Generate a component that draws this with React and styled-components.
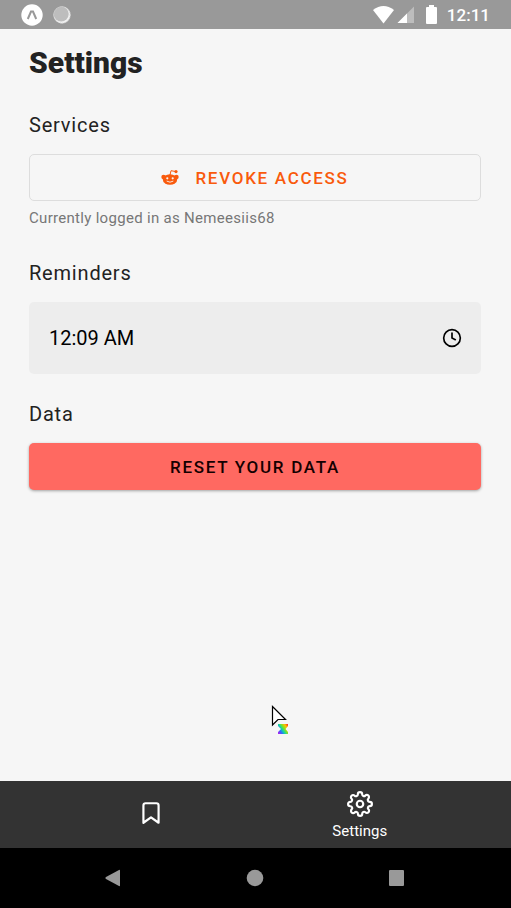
import React from "react";
import styled, { createGlobalStyle } from "styled-components";
import { FiBookmark, FiClock, FiSettings } from "react-icons/fi";

const GlobalStyle = createGlobalStyle`
  *, *::before, *::after { box-sizing: border-box; }
  body {
    margin: 0;
    background: #f6f6f6;
    font-family: Roboto, "Liberation Sans", sans-serif;
  }
  button { font-family: inherit; cursor: pointer; }
`;

const Screen = styled.div`
  display: flex;
  flex-direction: column;
  min-height: 100vh;
  color: #222;
`;

const StatusBar = styled.header`
  display: flex;
  align-items: center;
  justify-content: space-between;
  height: 29px;
  padding: 0 21px;
  background: #999;
  color: #fff;
`;

const StatusGroup = styled.div`
  display: flex;
  align-items: center;
  gap: ${(p) => p.$gap}px;
`;

const Clock = styled.time`
  margin-left: 10px;
  font-size: 17px;
  font-weight: 500;
  line-height: 20px;
`;

const Battery = styled.svg`
  margin-left: 11px;
`;

const Content = styled.main`
  flex: 1;
  padding: 16px 30px 30px 29px;
`;

const Title = styled.h1`
  margin: 0 0 30px;
  font-size: 30px;
  font-weight: 900;
  line-height: 36px;
`;

const Section = styled.section`
  margin-bottom: 26px;
`;

const SectionTitle = styled.h2`
  margin: 0 0 15px;
  font-size: 20px;
  font-weight: 400;
  letter-spacing: 0.04em;
  line-height: 28px;
`;

const ActionButton = styled.button`
  display: flex;
  align-items: center;
  justify-content: center;
  gap: 16px;
  width: 100%;
  height: 47px;
  border-radius: 5px;
  border: ${(p) => (p.$danger ? "0" : "1px solid #ddd")};
  background: ${(p) => (p.$danger ? "#ff6961" : "transparent")};
  box-shadow: ${(p) => (p.$danger ? "0 1px 3px rgba(0, 0, 0, 0.35)" : "none")};
  color: ${(p) => (p.$danger ? "#140000" : "#f95a0c")};
  font-size: 17px;
  font-weight: 500;
  letter-spacing: 0.1em;
`;

const Hint = styled.p`
  margin: 6px 0 30px;
  color: #777;
  font-size: 15px;
  letter-spacing: 0.02em;
  line-height: 22px;
`;

const TimeField = styled.button`
  display: flex;
  align-items: center;
  justify-content: space-between;
  width: 100%;
  height: 72px;
  padding: 0 19px 0 20px;
  border: 0;
  border-radius: 5px;
  background: #ededed;
  color: #000;
  font-size: 20px;
`;

const TabBar = styled.nav`
  display: flex;
  height: 67px;
  padding: 0 47px;
  background: #333;
`;

const Tab = styled.a`
  display: flex;
  flex: 1;
  flex-direction: column;
  align-items: center;
  justify-content: center;
  gap: 4px;
  padding: ${(p) => (p.$iconOnly ? "0 0 4px" : "2px 0 0")};
  color: #fff;
  font-size: 15px;
  line-height: 20px;
  text-decoration: none;
`;

const SystemBar = styled.footer`
  display: flex;
  align-items: center;
  justify-content: space-between;
  height: 60px;
  padding: 0 102px 0 101px;
  background: #000;
`;

const SystemButton = styled.button`
  display: flex;
  padding: 0;
  border: 0;
  background: none;
  color: #999;
`;

const Pointer = styled.svg`
  position: absolute;
  left: 271px;
  top: 705px;
  pointer-events: none;
`;

function RedditIcon() {
  return (
    <svg width="18" height="18" viewBox="0 0 18 18" aria-hidden="true">
      <path d="M9 6 10 1.700 14.500 2.500" fill="none" stroke="currentColor" strokeWidth="1" />
      <circle cx="15" cy="2.600" r="1.600" fill="currentColor" />
      <circle cx="2.600" cy="8" r="2.300" fill="currentColor" />
      <circle cx="15.400" cy="8" r="2.300" fill="currentColor" />
      <ellipse cx="9" cy="10.500" rx="7.200" ry="5.300" fill="currentColor" />
      <circle cx="6.300" cy="9.300" r="1.100" fill="#f6f6f6" />
      <circle cx="11.700" cy="9.300" r="1.100" fill="#f6f6f6" />
      <path d="M6 12.300Q9 14.300 12 12.300" fill="none" stroke="#f6f6f6" strokeWidth="0.900" strokeLinecap="round" />
    </svg>
  );
}

function StatusIcons() {
  return (
    <StatusGroup $gap={10}>
      <svg width="22" height="22" viewBox="0 0 22 22" aria-hidden="true">
        <circle cx="11" cy="11" r="10.7" fill="#fff" />
        <path d="M6.8 15 10 7.5h2L15.2 15" fill="none" stroke="#999" strokeWidth="2" />
      </svg>
      <svg width="18" height="18" viewBox="0 0 18 18" aria-hidden="true">
        <circle cx="9" cy="9" r="8.500" fill="#f1f1f1" />
        <circle cx="8.2" cy="8" r="7.5" fill="#bdbdbd" />
        <circle cx="9" cy="9" r="8.2" fill="none" stroke="#ccc" strokeWidth="1" strokeDasharray="1 1" />
      </svg>
    </StatusGroup>
  );
}

function StatusSignals() {
  return (
    <StatusGroup $gap={0}>
      <svg width="42" height="19" viewBox="0 0 42 19" aria-hidden="true">
        <path d="M0 5Q10.500-3 21 5L10.500 18.500Z" fill="#fff" />
        <path d="M41 1.500V18H24.500Z" fill="#bdbdbd" />
        <path d="M34 8.500V18H24.500Z" fill="#fff" />
      </svg>
      <Battery width="11" height="19" viewBox="0 0 11 19" aria-hidden="true">
        <path d="M3 0h5v2h2q1 0 1 1v15q0 1-1 1H1q-1 0-1-1V3q0-1 1-1h2Z" fill="#fff" />
      </Battery>
      <Clock>12:11</Clock>
    </StatusGroup>
  );
}

export default function App() {
  return (
    <Screen>
      <GlobalStyle />
      <StatusBar>
        <StatusIcons />
        <StatusSignals />
      </StatusBar>

      <Content>
        <Title>Settings</Title>
        <Section>
          <SectionTitle>Services</SectionTitle>
          <ActionButton type="button">
            <RedditIcon />
            REVOKE ACCESS
          </ActionButton>
          <Hint>Currently logged in as Nemeesiis68</Hint>
        </Section>
        <Section>
          <SectionTitle id="reminders">Reminders</SectionTitle>
          <TimeField type="button" aria-describedby="reminders">
            12:09 AM
            <FiClock size={20} aria-hidden="true" />
          </TimeField>
        </Section>
        <Section>
          <SectionTitle>Data</SectionTitle>
          <ActionButton type="button" $danger>
            RESET YOUR DATA
          </ActionButton>
        </Section>
      </Content>

      <TabBar>
        <Tab href="#saved" aria-label="Saved" $iconOnly>
          <FiBookmark size={26} aria-hidden="true" />
        </Tab>
        <Tab href="#settings" aria-current="page">
          <FiSettings size={26} aria-hidden="true" />
          Settings
        </Tab>
      </TabBar>

      <SystemBar>
        <SystemButton type="button" aria-label="Back">
          <svg width="20" height="18" viewBox="0 0 20 18">
            <path d="M19 1.500v15q0 1-1 .6L5 10q-1.500-1 0-2L18 .9q1-.4 1 .6Z" fill="currentColor" />
          </svg>
        </SystemButton>
        <SystemButton type="button" aria-label="Home">
          <svg width="18" height="18" viewBox="0 0 18 18">
            <circle cx="9" cy="9" r="8.300" fill="currentColor" />
          </svg>
        </SystemButton>
        <SystemButton type="button" aria-label="Recent apps">
          <svg width="20" height="18" viewBox="0 0 20 18">
            <rect x="0" y="1" width="15" height="16" rx="1" fill="currentColor" />
          </svg>
        </SystemButton>
      </SystemBar>

      <Pointer width="20" height="32" viewBox="0 0 20 32" aria-hidden="true">
        <defs>
          <linearGradient id="spectrum" gradientUnits="userSpaceOnUse" x1="7" y1="27" x2="17" y2="20">
            <stop offset="0" stopColor="#a02af0" />
            <stop offset="0.2" stopColor="#2b6cff" />
            <stop offset="0.4" stopColor="#12d8a0" />
            <stop offset="0.6" stopColor="#8be01c" />
            <stop offset="0.8" stopColor="#ffc000" />
            <stop offset="1" stopColor="#ff3b1f" />
          </linearGradient>
        </defs>
        <path d="M1.500 1.500V20L7 14.500H14.500Z" fill="#fff" stroke="#000" strokeWidth="1.200" />
        <path d="M7 19H17V21L14.500 24L17 27V29H7V27L10 24L7 21Z" fill="url(#spectrum)" />
      </Pointer>
    </Screen>
  );
}
